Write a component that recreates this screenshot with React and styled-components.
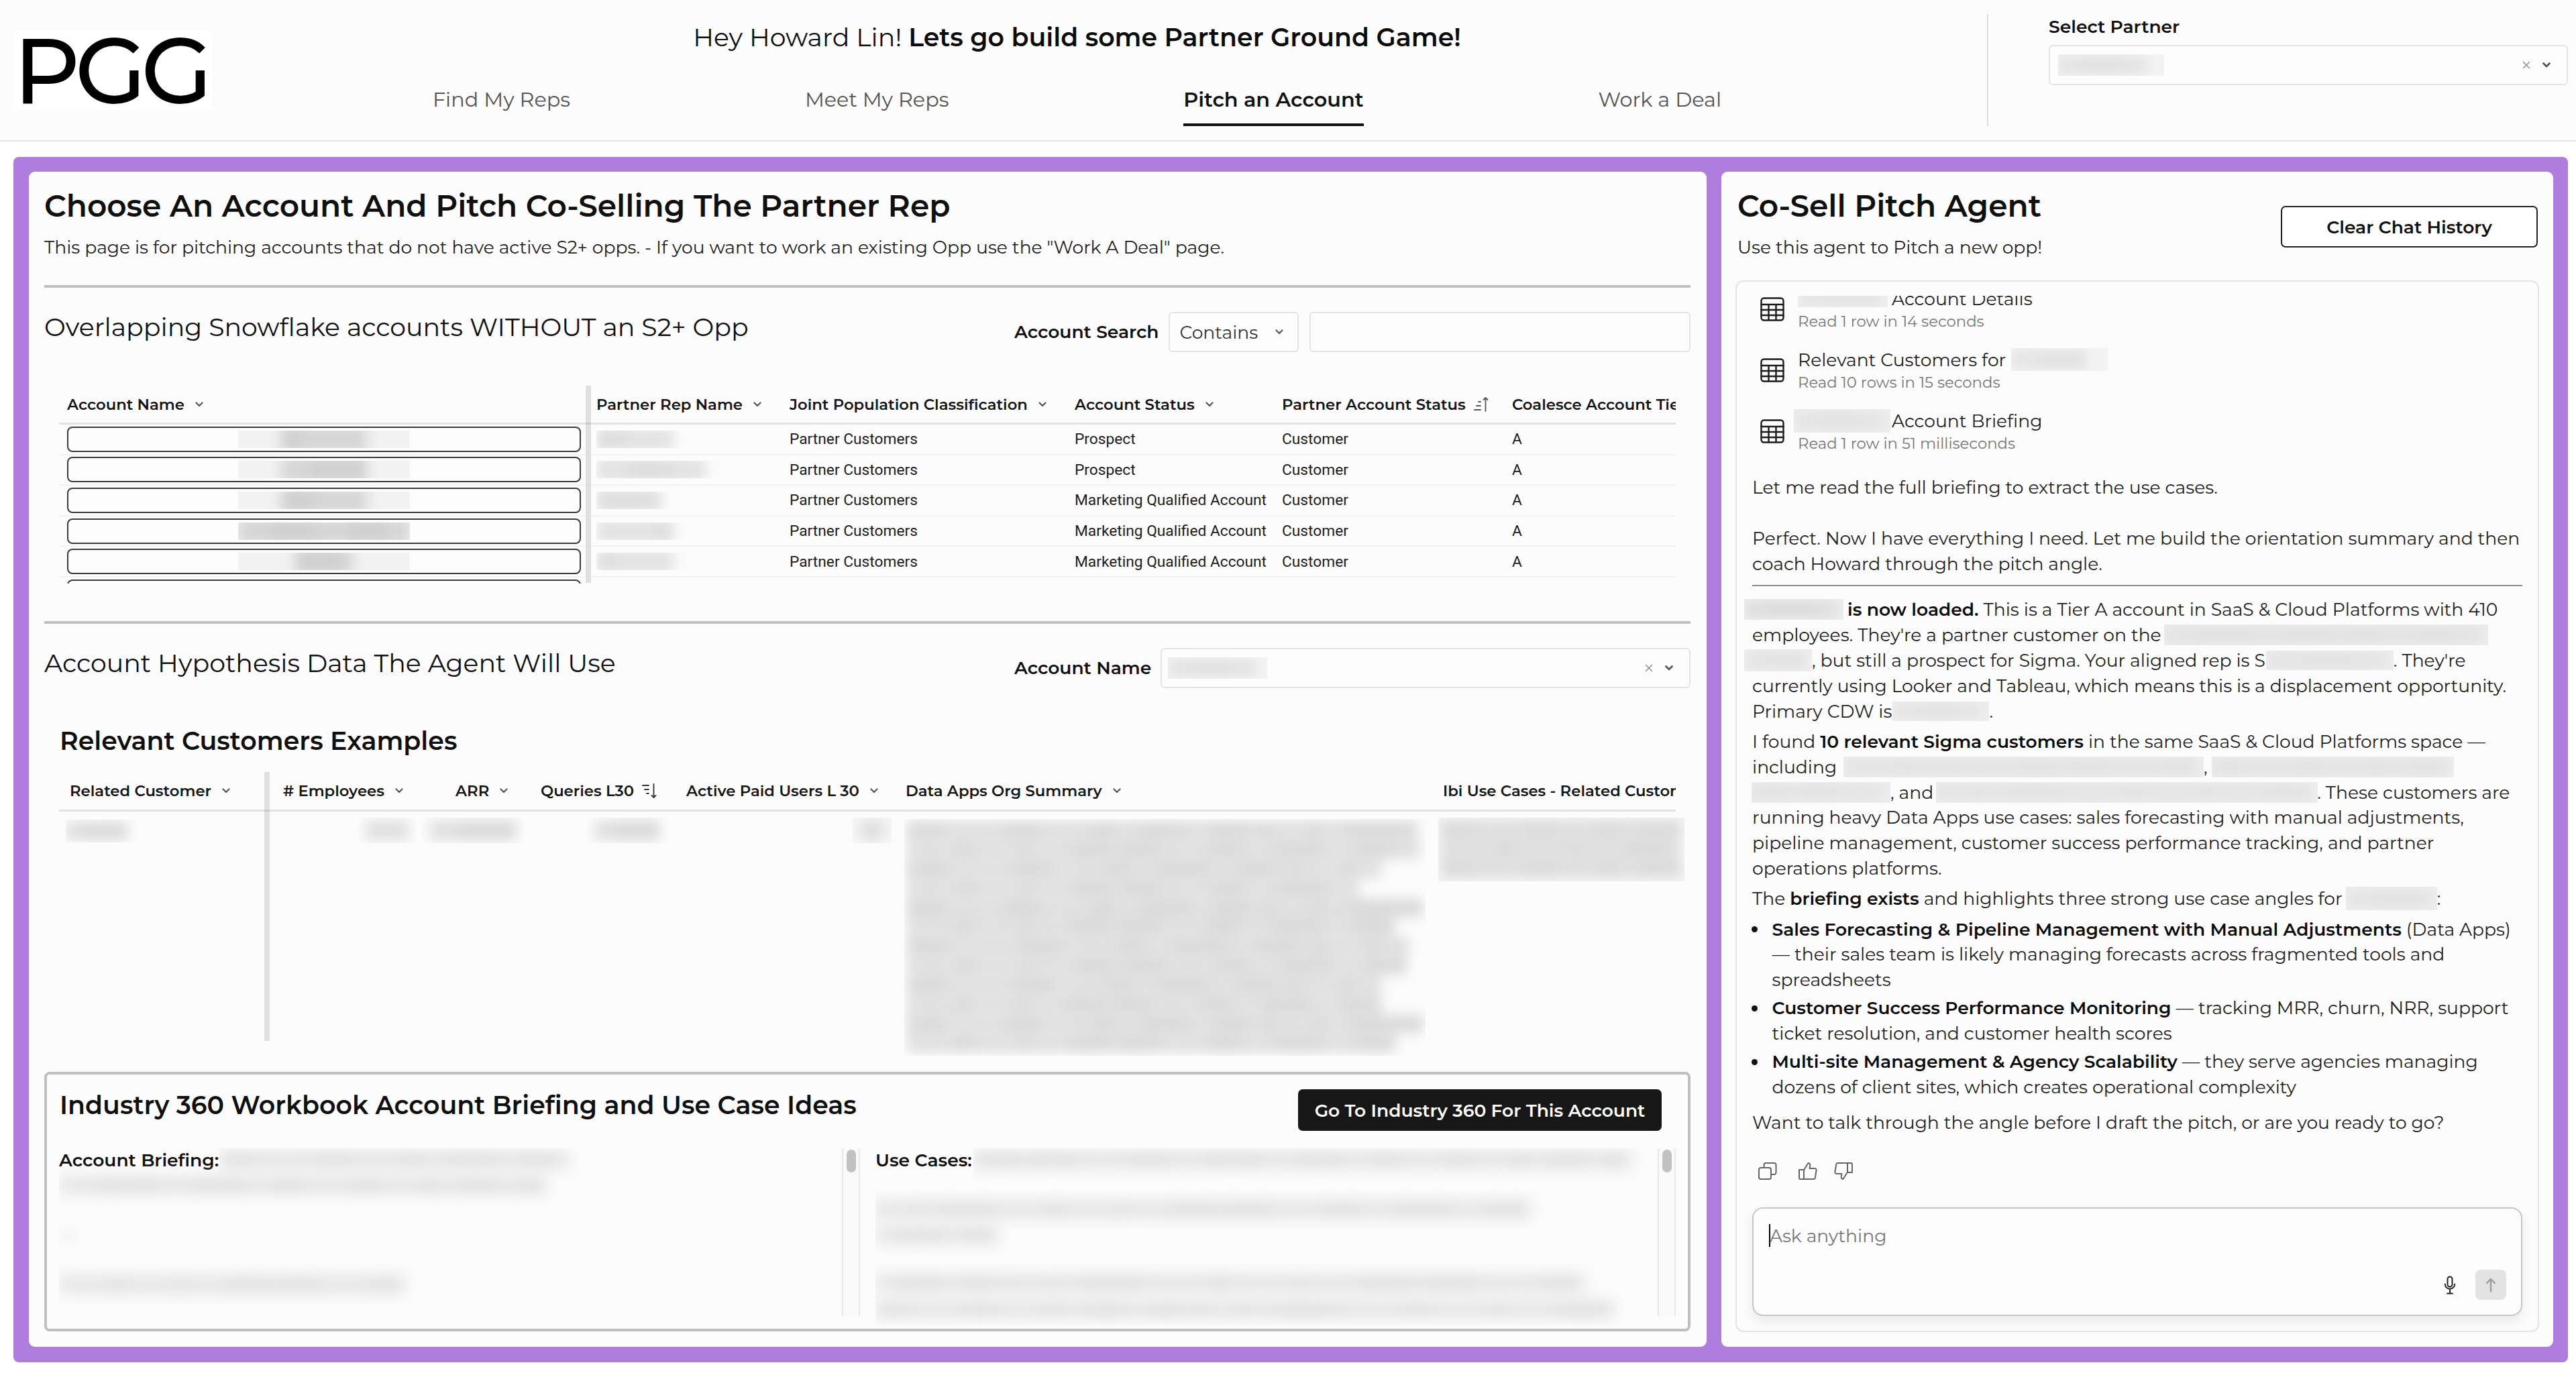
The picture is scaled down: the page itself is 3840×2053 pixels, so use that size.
import React from "react";
import styled, { createGlobalStyle, css } from "styled-components";

const SANS = `"Montserrat", "Inter", "Open Sans", sans-serif`;
const CELL = `"Roboto", "Inter", sans-serif`;

const size = { xs: "22.74px", sm: "26.55px", md: "30.3px", lg: "37.9px", xl: "45.5px" };

const ink = "#101010";
const soft = "#fcfcfc";
const line = "#e4e4e4";
const rule = "#bfbfbf";
const purple = "#ae7ddd";

const GlobalStyle = createGlobalStyle`
  * { box-sizing: border-box; }
  body { margin: 0; background: #fff; color: ${ink}; font-family: ${SANS}; overflow: hidden; }
`;

const Txt = styled.span`
  flex: none;
  white-space: nowrap;
  margin-left: ${(p) => p.$ml || 0}px;
`;

const B = styled.b`
  font-weight: 600;
  color: #0c0c0c;
`;

/* ---------- redacted content ---------- */

const RedactBox = styled.span`
  display: flex;
  align-items: center;
  justify-content: ${(p) => (p.$center ? "center" : "flex-start")};
  flex: none;
  overflow: hidden;
  width: ${(p) => p.$w}px;
  height: ${(p) => p.$h}px;
  margin: ${(p) => p.$mt || 0}px 0 0 ${(p) => p.$ml || 0}px;
  background: ${(p) => p.$base || "transparent"};
`;

const Smudge = styled.span`
  display: flex;
  flex: none;
  width: ${(p) => p.$w}px;
  height: ${(p) => p.$h}px;
  filter: blur(${(p) => p.$blur || 9}px);
`;

const Word = styled.span`
  flex: ${(p) => p.$grow} 1 0;
  height: 100%;
  opacity: ${(p) => (p.$faint ? 0.84 : 1)};
  background: ${(p) => p.$tone};
`;

function words(width, seed) {
  const count = Math.max(1, Math.round(width / 52));
  return Array.from({ length: count }, (_, i) => 1 + ((seed * 7 + i * 13 + ((i * i) % 5)) % 6));
}

function Redact({ w, h = 31, ml, mt, base = "#efefef", tone = "#e2e2e2", inner, center, bar, blur, seed = 1 }) {
  const iw = inner || w - 10;
  return (
    <RedactBox $w={w} $h={h} $ml={ml} $mt={mt} $base={base} $center={center}>
      <Smudge $w={iw} $h={bar || h * 0.8} $blur={blur}>
        {words(iw, seed).map((g, i) => <Word key={i} $grow={g} $tone={tone} $faint={(i + seed) % 2} />)}
      </Smudge>
    </RedactBox>
  );
}

/* ---------- icons ---------- */

const Svg = styled.svg`
  flex: none;
  display: block;
  fill: none;
  stroke: ${(p) => p.$c || "#555"};
  stroke-width: ${(p) => p.$s || 2};
  stroke-linecap: round;
  stroke-linejoin: round;
  margin-left: ${(p) => p.$ml || 0}px;
`;

const Chevron = ({ ml, c = "#555", s = 2.2 }) => (
  <Svg width="12" height="8" viewBox="0 0 12 8" $c={c} $s={s} $ml={ml}><path d="M1.5 1.5 6 6l4.500-4.500" /></Svg>
);
const Cross = () => (
  <Svg width="12" height="12" viewBox="0 0 12 12" $c="#888" $s={1.4}><path d="M1.500 1.500l9 9M10.500 1.500l-9 9" /></Svg>
);
const SortAsc = () => (
  <Svg width="24" height="24" viewBox="0 0 24 24" $c="#555" $s={1.8} $ml={11}>
    <path d="M8 8h3M5 14h6M2 20h9M18.500 22V2M15.500 5l3-3 3 3" />
  </Svg>
);
const SortDesc = () => (
  <Svg width="24" height="24" viewBox="0 0 24 24" $c="#333" $s={1.8} $ml={11}>
    <path d="M2 4h9M5 10h6M8 16h3M18.500 2v20M15.500 19l3 3 3-3" />
  </Svg>
);
const GridIcon = () => (
  <Svg width="36" height="36" viewBox="0 0 36 36" $c="#1c1c1c" $s={2.4}>
    <rect x="1.500" y="1.500" width="33" height="33" rx="4" />
    <path d="M1.500 11h33M1.500 19h33M1.500 27h33M12.500 11v23M23.500 11v23" />
  </Svg>
);
const CopyIcon = () => (
  <Svg width="30" height="28" viewBox="0 0 30 28" $c="#666" $s={2}>
    <rect x="2" y="9" width="18" height="17" rx="3" />
    <path d="M9.500 9V5a3 3 0 0 1 3-3h12a3 3 0 0 1 3 3v11a3 3 0 0 1-3 3H20" />
  </Svg>
);
const THUMB = "M2 12h7v14H4a2 2 0 0 1-2-2zM9 12.500 15.500 2c2.200.3 3.200 2 2.800 4.200L17.500 10H25a2.600 2.600 0 0 1 2.600 3l-1.800 10.800A2.600 2.600 0 0 1 23.200 26H9";
const ThumbUp = () => (
  <Svg width="30" height="28" viewBox="0 0 30 28" $c="#666" $s={2}><path d={THUMB} /></Svg>
);
const ThumbDown = () => (
  <Svg width="30" height="28" viewBox="0 0 30 28" $c="#666" $s={2}>
    <path transform="rotate(180 15 14)" d={THUMB} />
  </Svg>
);
const MicIcon = () => (
  <Svg width="18" height="28" viewBox="0 0 18 28" $c="#222" $s={2}>
    <rect x="5.500" y="1.500" width="7" height="15" rx="3.500" />
    <path d="M1.800 12.500a7.200 7.200 0 0 0 14.400 0M9 20v6M5 26.500h8" />
  </Svg>
);
const ArrowUp = () => (
  <Svg width="18" height="22" viewBox="0 0 18 22" $c="#9c9c9c" $s={2.4}><path d="M9 20.500V2M3 8l6-6 6 6" /></Svg>
);

/* ---------- header ---------- */

const Page = styled.div`
  width: 3840px;
  height: 2053px;
  background: #fff;
`;

const Header = styled.header`
  display: flex;
  align-items: flex-start;
  height: 211px;
  padding-left: 20px;
  background: ${soft};
  border-bottom: 2px solid #e6e6e6;
`;

const Logo = styled.div`
  flex: none;
  width: 296px;
  height: 117px;
  margin-top: 46px;
  background: #fff;
  color: #000;
  font-size: 138px;
  font-weight: 500;
  letter-spacing: -8px;
  line-height: 117px;
  white-space: nowrap;
`;

const HeaderMain = styled.div`
  width: 2271px;
  margin-left: 154px;
  padding-top: 31px;
`;

const Greeting = styled.div`
  height: 50px;
  line-height: 50px;
  text-align: center;
  font-size: ${size.lg};
`;

const Nav = styled.nav`
  display: flex;
  justify-content: space-around;
  margin-top: 48px;
`;

const NavItem = styled.a`
  padding-bottom: 15px;
  border-bottom: 4px solid ${(p) => (p.$active ? "#111" : "transparent")};
  color: ${(p) => (p.$active ? "#111" : "#555")};
  font-size: ${size.md};
  font-weight: ${(p) => (p.$active ? 600 : 400)};
  line-height: 40px;
`;

const HeaderDivider = styled.div`
  width: 2px;
  height: 167px;
  margin: 21px 90px 0 221px;
  background: #dedede;
`;

const PartnerBlock = styled.div`
  width: 774px;
  padding-top: 22px;
`;

const Label = styled.div`
  flex: none;
  font-size: ${size.sm};
  font-weight: 600;
  line-height: 36px;
`;

const Select = styled.div`
  display: flex;
  align-items: center;
  width: ${(p) => p.$w}px;
  height: 60px;
  margin-top: ${(p) => p.$mt || 0}px;
  margin-left: ${(p) => p.$ml || 0}px;
  padding: 0 ${(p) => p.$pr ?? 24}px 0 ${(p) => p.$pl ?? 12}px;
  background: #fdfdfd;
  border: 2px solid ${line};
  border-radius: 6px;
  color: #333;
  font-size: ${size.sm};
`;

const SearchField = styled(Select)`
  flex: 1;
`;

const Push = styled.span`
  display: flex;
  align-items: center;
  gap: 18px;
  margin-left: auto;
`;

/* ---------- frame and panels ---------- */

const Frame = styled.main`
  display: flex;
  gap: 22px;
  width: 3808px;
  height: 1797px;
  margin: 23px 0 0 20px;
  padding: 22px 22px 23px 23px;
  background: ${purple};
  border-radius: 8px;
`;

const Panel = styled.section`
  display: flex;
  flex-direction: column;
  width: ${(p) => p.$w}px;
  padding: ${(p) => p.$pad};
  background: ${soft};
  border-radius: 9px;
`;

const Title = styled.h1`
  margin: 0;
  height: 50px;
  font-size: ${size.xl};
  font-weight: 600;
  line-height: 50px;
`;

const Subtitle = styled.p`
  margin: 19px 0 0;
  height: 36px;
  color: #222;
  font-size: ${size.sm};
  line-height: 36px;
`;

const Rule = styled.div`
  flex: none;
  height: 4px;
  margin-top: ${(p) => p.$mt}px;
  background: ${rule};
`;

const SectionRow = styled.div`
  display: flex;
  align-items: center;
  flex: none;
  height: 60px;
  margin-top: 36px;
`;

const SectionTitle = styled.h2`
  flex: none;
  width: 1446px;
  margin: 0 0 15px;
  font-size: ${size.lg};
  font-weight: 400;
  line-height: 44px;
`;

const H3 = styled.h3`
  flex: none;
  margin: ${(p) => p.$m || 0};
  font-size: ${size.lg};
  font-weight: 600;
  line-height: 44px;
`;

/* ---------- tables ---------- */

const Table = styled.div`
  display: flex;
  flex: none;
  width: 2410px;
  height: ${(p) => p.$h}px;
  margin: ${(p) => p.$mt}px 0 0 22px;
  ${(p) => p.$clip && css`overflow: hidden;`}
`;

const Pane = styled.div`
  flex: none;
  width: ${(p) => p.$w}px;
`;

const FreezeBar = styled.div`
  flex: none;
  width: 8px;
  height: ${(p) => p.$h}px;
  background: linear-gradient(#c9c9c9, #c9c9c9) 0 ${(p) => p.$at}px / 100% 3px no-repeat #e0e0e0;
`;

const HeadRow = styled.div`
  display: flex;
  align-items: center;
  height: ${(p) => p.$h}px;
  padding-left: ${(p) => p.$pl}px;
  overflow: hidden;
  border-bottom: 3px solid #e2e2e2;
  color: #151515;
  font-size: ${size.xs};
  font-weight: 600;
`;

const Col = styled.div`
  display: flex;
  align-items: center;
  flex: none;
  width: ${(p) => p.$w}px;
`;

const Row = styled.div`
  display: flex;
  align-items: center;
  height: 45.6px;
  padding-left: ${(p) => p.$pl}px;
  overflow: hidden;
  border-bottom: 2px solid #f2f2f2;
  color: #1c1c1c;
  font-family: ${CELL};
  font-size: ${size.xs};
`;

const Pill = styled.div`
  display: flex;
  align-items: center;
  justify-content: center;
  flex: none;
  width: 766px;
  height: 38px;
  border: 2px solid #3a3a3a;
  border-radius: 8px;
  background: #fdfdfd;
`;

const SmudgedRow = styled.div`
  display: flex;
  align-items: flex-start;
  padding: 9px 0 0 ${(p) => p.$pl}px;
`;

const Paragraph = styled.div`
  display: flex;
  flex-direction: column;
  flex: none;
  width: ${(p) => p.$w}px;
  height: ${(p) => p.$h}px;
  margin: ${(p) => p.$mt || 0}px 0 0 ${(p) => p.$ml || 0}px;
  padding-top: ${(p) => p.$pt || 0}px;
  overflow: hidden;
  background: ${(p) => p.$base || "transparent"};
`;

const BlurredLines = styled.div`
  filter: blur(9px);
`;

const BlurredLine = styled.div`
  display: flex;
  width: ${(p) => p.$w}px;
  height: 27px;
  margin: 0 0 1.9px 4px;
`;

function TextBlock({ lines, ...box }) {
  return (
    <Paragraph {...box}>
      <BlurredLines>
        {lines.map((w, i) => (
          <BlurredLine key={i} $w={w}>
            {words(w, i * 3 + 2).map((g, j) => <Word key={j} $grow={g} $tone="#dadada" $faint={(i + j) % 2} />)}
          </BlurredLine>
        ))}
      </BlurredLines>
    </Paragraph>
  );
}

const Th = ({ col, text, icon }) => (
  <Col $w={col}><Txt>{text}</Txt>{icon || <Chevron ml={16} />}</Col>
);

const ACCOUNTS = [
  { name: 128, rep: 115, status: "Prospect" },
  { name: 128, rep: 163, status: "Prospect" },
  { name: 128, rep: 98, status: "Marketing Qualified Account" },
  { name: 256, rep: 115, status: "Marketing Qualified Account" },
  { name: 86, rep: 115, status: "Marketing Qualified Account" },
];

function AccountsTable() {
  return (
    <Table $h={295} $mt={50} $clip>
      <Pane $w={785}>
        <HeadRow $h={58} $pl={12}><Th col={700} text="Account Name" /></HeadRow>
        {ACCOUNTS.map((a, i) => (
          <Row key={i} $pl={12}>
            <Pill><Redact w={256} h={26} base="#f2f2f2" tone="#d0d0d0" inner={a.name} bar={40} center seed={i} /></Pill>
          </Row>
        ))}
        <Row $pl={12}><Pill /></Row>
      </Pane>
      <FreezeBar $h={294} $at={55} />
      <Pane $w={1617}>
        <HeadRow $h={58} $pl={8}>
          <Th col={288} text="Partner Rep Name" />
          <Th col={425} text="Joint Population Classification" />
          <Th col={309} text="Account Status" />
          <Th col={343} text="Partner Account Status" icon={<SortAsc />} />
          <Th col={300} text="Coalesce Account Tier" />
        </HeadRow>
        {ACCOUNTS.map((a, i) => (
          <Row key={i} $pl={8}>
            <Col $w={288}><Redact w={256} h={26} base="transparent" tone="#dedede" inner={a.rep} bar={36} seed={i + 2} /></Col>
            <Col $w={425}><Txt>Partner Customers</Txt></Col>
            <Col $w={309}><Txt>{a.status}</Txt></Col>
            <Col $w={343}><Txt>Customer</Txt></Col>
            <Col $w={100}>A</Col>
          </Row>
        ))}
      </Pane>
    </Table>
  );
}

const SUMMARY_LINES = [761, 765, 707, 674, 769, 727, 749, 745, 707, 707, 769, 728];

function CustomersTable() {
  return (
    <Table $h={424} $mt={24}>
      <Pane $w={306}>
        <HeadRow $h={59} $pl={16}><Th col={280} text="Related Customer" /></HeadRow>
        <SmudgedRow $pl={10}>
          <Redact w={110} h={34} mt={3} base="transparent" tone="#dadada" inner={92} />
        </SmudgedRow>
      </Pane>
      <FreezeBar $h={401} $at={56} />
      <Pane $w={2096}>
        <HeadRow $h={59} $pl={20}>
          <Th col={257} text="# Employees" />
          <Th col={127} text="ARR" />
          <Th col={217} text="Queries L30" icon={<SortDesc />} />
          <Th col={327} text="Active Paid Users L 30" />
          <Th col={801} text="Data Apps Org Summary" />
          <Th col={460} text="Ibi Use Cases - Related Customer" />
        </HeadRow>
        <SmudgedRow $pl={132}>
          <Redact w={86} h={38} base="transparent" tone="#dadada" inner={64} center />
          <Redact w={152} h={38} ml={9} base="transparent" tone="#dadada" inner={128} center />
          <Redact w={120} h={38} ml={94} base="transparent" tone="#dadada" inner={96} center />
          <Redact w={58} h={38} ml={276} base="#f7f7f7" tone="#dadada" inner={36} center />
          <TextBlock lines={SUMMARY_LINES} $w={777} $h={353} $ml={19} $mt={2} $pt={3} />
          <TextBlock lines={[358, 356, 358]} $w={367} $h={95} $ml={19} $pt={4} $base="#f6f6f6" />
        </SmudgedRow>
      </Pane>
    </Table>
  );
}

/* ---------- industry box ---------- */

const IndustryBox = styled.div`
  flex: none;
  height: 387px;
  margin-top: 23px;
  padding: 22px 19px 0 13px;
  border: 4px solid #bfbfbf;
  border-radius: 8px;
`;

const IndustryHead = styled.div`
  display: flex;
  justify-content: space-between;
  align-items: flex-start;
  padding: 0 20px 0 6px;
`;

const DarkButton = styled.button`
  width: 542px;
  height: 62px;
  padding: 0;
  border: 0;
  border-radius: 7px;
  background: #171717;
  color: #fff;
  font-family: ${SANS};
  font-size: ${size.sm};
  font-weight: 600;
`;

const NoteColumns = styled.div`
  display: flex;
  align-items: flex-start;
  margin-top: 26px;
`;

const NotePane = styled.div`
  flex: none;
  width: ${(p) => p.$w}px;
  height: ${(p) => p.$h}px;
  margin-left: ${(p) => p.$ml || 0}px;
  overflow: hidden;
`;

const NoteLine = styled.div`
  display: flex;
  align-items: center;
  height: 36px;
  margin-top: ${(p) => p.$mt || 0}px;
  padding-left: 5px;
  font-size: ${size.sm};
  font-weight: 600;
`;

const Track = styled.div`
  flex: none;
  width: 27px;
  height: 250px;
  margin-left: ${(p) => p.$ml}px;
  padding: 2px 4px 0 5px;
  border: solid #e8e8e8;
  border-width: 0 2px;
  background: #fafafa;
`;

const Thumb = styled.div`
  height: 34px;
  border-radius: 8px;
  background: #c1c1c1;
`;

const NoteSmudge = ({ w, ml = 0, seed }) => (
  <Redact w={w + 20} h={60} ml={ml} base="transparent" tone="#e0e0e0" inner={w} bar={26} blur={11} seed={seed} />
);

function Industry() {
  return (
    <IndustryBox>
      <IndustryHead>
        <H3 $m="2px 0 0">Industry 360 Workbook Account Briefing and Use Case Ideas</H3>
        <DarkButton>Go To Industry 360 For This Account</DarkButton>
      </IndustryHead>
      <NoteColumns>
        <NotePane $w={1157} $h={250}>
          <NoteLine $mt={-1}><Txt>Account Briefing:</Txt><NoteSmudge w={520} ml={1} seed={2} /></NoteLine>
          <NoteLine $mt={2}><NoteSmudge w={726} seed={3} /></NoteLine>
          <NoteLine $mt={40}><Redact w={44} h={30} base="transparent" tone="#f0f0f0" inner={24} bar={14} /></NoteLine>
          <NoteLine $mt={36}><NoteSmudge w={514} seed={5} /></NoteLine>
        </NotePane>
        <Track $ml={15}><Thumb /></Track>
        <NotePane $w={1154} $h={264} $ml={18}>
          <NoteLine $mt={-1}><Txt>Use Cases:</Txt><NoteSmudge w={980} ml={2} seed={4} /></NoteLine>
          <NoteLine $mt={38}><NoteSmudge w={976} seed={6} /></NoteLine>
          <NoteLine $mt={2}><NoteSmudge w={182} seed={1} /></NoteLine>
          <NoteLine $mt={36}><NoteSmudge w={1056} seed={7} /></NoteLine>
          <NoteLine $mt={3}><NoteSmudge w={1100} seed={8} /></NoteLine>
        </NotePane>
        <Track $ml={17}><Thumb /></Track>
      </NoteColumns>
    </IndustryBox>
  );
}

/* ---------- agent panel ---------- */

const AgentHead = styled.div`
  display: flex;
  justify-content: space-between;
  flex: none;
  height: 162px;
  padding: 26px 2px 0 3px;
`;

const OutlineButton = styled.button`
  width: 383px;
  height: 62px;
  margin-top: 25px;
  padding: 0;
  border: 2px solid #222;
  border-radius: 7px;
  background: #fff;
  color: ${ink};
  font-family: ${SANS};
  font-size: ${size.sm};
  font-weight: 600;
`;

const Chat = styled.div`
  display: flex;
  flex-direction: column;
  flex: none;
  height: 1568px;
  padding-top: 21px;
  border: 2px solid ${line};
  border-radius: 12px;
`;

const Messages = styled.div`
  flex: none;
  height: 1359px;
  padding: 0 10px 0 23px;
  overflow: hidden;
  color: #1f1f1f;
  font-size: ${size.sm};
`;

const Steps = styled.div`
  margin: -26px 0 19.5px 12px;
`;

const Step = styled.div`
  display: flex;
  align-items: center;
  gap: 20px;
  height: 91px;
`;

const StepText = styled.div`
  padding-top: 3px;
`;

const StepTitle = styled.div`
  display: flex;
  align-items: center;
  height: 34px;
`;

const StepMeta = styled.div`
  height: 34px;
  color: #767676;
  font-size: ${size.xs};
  line-height: 34px;
`;

const Para = styled.div`
  margin-top: ${(p) => p.$mt || 0}px;
`;

const Line = styled.div`
  display: flex;
  align-items: center;
  height: 37.9px;
`;

const Hr = styled.div`
  width: 1148px;
  height: 2px;
  margin: 12.5px 0 15.5px;
  background: #8c8c8c;
`;

const Item = styled.div`
  display: grid;
  grid-template-columns: 29.5px 1fr;
  margin-top: ${(p) => p.$mt}px;
`;

const Dot = styled.i`
  width: 9px;
  height: 9px;
  margin: 15px 0 0 -1px;
  border-radius: 50%;
  background: #111;
`;

const Actions = styled.div`
  display: flex;
  margin: 39.5px 0 0 8px;
`;

const ActionSlot = styled.span`
  width: ${(p) => p.$w}px;
`;

const Composer = styled.div`
  display: flex;
  flex-direction: column;
  justify-content: space-between;
  flex: none;
  height: 162px;
  margin: 0 23px 0 23px;
  padding: 23px 22px 22px 23px;
  border: 2px solid #c6c6c6;
  border-radius: 16px;
  background: #fdfdfd;
  box-shadow: 0 8px 18px rgba(0, 0, 0, 0.08);
`;

const Prompt = styled.div`
  display: flex;
  align-items: center;
  height: 34px;
  color: #777;
  font-size: ${size.sm};
`;

const Caret = styled.span`
  width: 2px;
  height: 34px;
  margin-right: -1px;
  background: #000;
`;

const Tools = styled.div`
  display: flex;
  align-items: center;
  justify-content: flex-end;
  gap: 29px;
`;

const Send = styled.button`
  display: flex;
  align-items: center;
  justify-content: center;
  width: 46px;
  height: 45px;
  padding: 0;
  border: 0;
  border-radius: 8px;
  background: #e3e3e3;
`;

function Agent() {
  return (
    <Panel $w={1240} $pad="0 21px 22px">
      <AgentHead>
        <div>
          <Title>Co-Sell Pitch Agent</Title>
          <Subtitle>Use this agent to Pitch a new opp!</Subtitle>
        </div>
        <OutlineButton>Clear Chat History</OutlineButton>
      </AgentHead>
      <Chat>
        <Messages>
          <Steps>
            <Step>
              <GridIcon />
              <StepText>
                <StepTitle><Redact w={134} h={26} /><Txt $ml={6}>Account Details</Txt></StepTitle>
                <StepMeta>Read 1 row in 14 seconds</StepMeta>
              </StepText>
            </Step>
            <Step>
              <GridIcon />
              <StepText>
                <StepTitle><Txt>Relevant Customers for</Txt><Redact w={144} h={34} ml={8} base="#f3f3f3" inner={112} /></StepTitle>
                <StepMeta>Read 10 rows in 15 seconds</StepMeta>
              </StepText>
            </Step>
            <Step>
              <GridIcon />
              <StepText>
                <StepTitle><Redact w={144} h={35} ml={-6} /><Txt $ml={2}>Account Briefing</Txt></StepTitle>
                <StepMeta>Read 1 row in 51 milliseconds</StepMeta>
              </StepText>
            </Step>
          </Steps>

          <Line><Txt>Let me read the full briefing to extract the use cases.</Txt></Line>
          <Para $mt={38.4}>
            <Line><Txt>Perfect. Now I have everything I need. Let me build the orientation summary and then</Txt></Line>
            <Line><Txt>coach Howard through the pitch angle.</Txt></Line>
          </Para>
          <Hr />
          <Para>
            <Line>
              <Redact w={148} ml={-12} tone="#dadada" />
              <Txt $ml={6}><B>is now loaded.</B> This is a Tier A account in SaaS &amp; Cloud Platforms with 410</Txt>
            </Line>
            <Line>
              <Txt>employees. They're a partner customer on the</Txt>
              <Redact w={483} ml={4} base="#ededed" tone="#e1e1e1" seed={3} />
            </Line>
            <Line>
              <Redact w={101} h={33} ml={-12} />
              <Txt>, but still a prospect for Sigma. Your aligned rep is S</Txt>
              <Redact w={190} h={29} ml={1} base="#ededed" />
              <Txt>. They're</Txt>
            </Line>
            <Line><Txt>currently using Looker and Tableau, which means this is a displacement opportunity.</Txt></Line>
            <Line>
              <Txt>Primary CDW is</Txt>
              <Redact w={144} h={29} ml={1} /><Txt>.</Txt>
            </Line>
          </Para>
          <Para $mt={7.3}>
            <Line><Txt>I found <B>10 relevant Sigma customers</B> in the same SaaS &amp; Cloud Platforms space —</Txt></Line>
            <Line>
              <Txt>including</Txt>
              <Redact w={537} ml={10} base="#eeeeee" seed={5} />
              <Txt>,</Txt>
              <Redact w={361} ml={6} base="#eeeeee" seed={2} />
            </Line>
            <Line>
              <Redact w={207} ml={-1} base="#eeeeee" seed={4} />
              <Txt>, and</Txt>
              <Redact w={569} ml={4} base="#eeeeee" seed={6} />
              <Txt $ml={-1}>. These customers are</Txt>
            </Line>
            <Line><Txt>running heavy Data Apps use cases: sales forecasting with manual adjustments,</Txt></Line>
            <Line><Txt>pipeline management, customer success performance tracking, and partner</Txt></Line>
            <Line><Txt>operations platforms.</Txt></Line>
          </Para>
          <Para $mt={7.3}>
            <Line>
              <Txt>The <B>briefing exists</B> and highlights three strong use case angles for</Txt>
              <Redact w={136} h={35} ml={5} /><Txt>:</Txt>
            </Line>
          </Para>
          <Item $mt={7.3}>
            <Dot />
            <div>
              <Line><Txt><B>Sales Forecasting &amp; Pipeline Management with Manual Adjustments</B> (Data Apps)</Txt></Line>
              <Line><Txt>— their sales team is likely managing forecasts across fragmented tools and</Txt></Line>
              <Line><Txt>spreadsheets</Txt></Line>
            </div>
          </Item>
          <Item $mt={4}>
            <Dot />
            <div>
              <Line><Txt><B>Customer Success Performance Monitoring</B> — tracking MRR, churn, NRR, support</Txt></Line>
              <Line><Txt>ticket resolution, and customer health scores</Txt></Line>
            </div>
          </Item>
          <Item $mt={4}>
            <Dot />
            <div>
              <Line><Txt><B>Multi-site Management &amp; Agency Scalability</B> — they serve agencies managing</Txt></Line>
              <Line><Txt>dozens of client sites, which creates operational complexity</Txt></Line>
            </div>
          </Item>
          <Para $mt={15}>
            <Line><Txt>Want to talk through the angle before I draft the pitch, or are you ready to go?</Txt></Line>
          </Para>
          <Actions>
            <ActionSlot $w={60}><CopyIcon /></ActionSlot>
            <ActionSlot $w={53}><ThumbUp /></ActionSlot>
            <ThumbDown />
          </Actions>
        </Messages>
        <Composer>
          <Prompt><Caret /><Txt>Ask anything</Txt></Prompt>
          <Tools><MicIcon /><Send><ArrowUp /></Send></Tools>
        </Composer>
      </Chat>
    </Panel>
  );
}

/* ---------- page ---------- */

export default function App() {
  return (
    <Page>
      <GlobalStyle />
      <Header>
        <Logo>PGG</Logo>
        <HeaderMain>
          <Greeting>Hey Howard Lin! <B>Lets go build some Partner Ground Game!</B></Greeting>
          <Nav>
            <NavItem>Find My Reps</NavItem>
            <NavItem>Meet My Reps</NavItem>
            <NavItem $active>Pitch an Account</NavItem>
            <NavItem>Work a Deal</NavItem>
          </Nav>
        </HeaderMain>
        <HeaderDivider />
        <PartnerBlock>
          <Label>Select Partner</Label>
          <Select $w={774} $mt={9}>
            <Redact w={158} h={32} base="#f3f3f3" tone="#e0e0e0" inner={132} />
            <Push><Cross /><Chevron s={2.8} /></Push>
          </Select>
        </PartnerBlock>
      </Header>

      <Frame>
        <Panel $w={2501} $pad="26px 24px 0 23px">
          <Title>Choose An Account And Pitch Co-Selling The Partner Rep</Title>
          <Subtitle>This page is for pitching accounts that do not have active S2+ opps. - If you want to work an existing Opp use the "Work A Deal" page.</Subtitle>
          <Rule $mt={38} />

          <SectionRow>
            <SectionTitle>Overlapping Snowflake accounts WITHOUT an S2+ Opp</SectionTitle>
            <Label>Account Search</Label>
            <Select $w={194} $ml={15} $pl={14} $pr={21}>
              <Txt>Contains</Txt><Push><Chevron /></Push>
            </Select>
            <SearchField $ml={16} />
          </SectionRow>
          <AccountsTable />
          <Rule $mt={56} />

          <SectionRow>
            <SectionTitle>Account Hypothesis Data The Agent Will Use</SectionTitle>
            <Label>Account Name</Label>
            <SearchField $ml={14} $pl={9}>
              <Redact w={148} h={32} base="#f4f4f4" tone="#e0e0e0" inner={132} />
              <Push><Cross /><Chevron s={2.8} /></Push>
            </SearchField>
          </SectionRow>
          <H3 $m="57px 0 0 23px">Relevant Customers Examples</H3>
          <CustomersTable />
          <Industry />
        </Panel>
        <Agent />
      </Frame>
    </Page>
  );
}
